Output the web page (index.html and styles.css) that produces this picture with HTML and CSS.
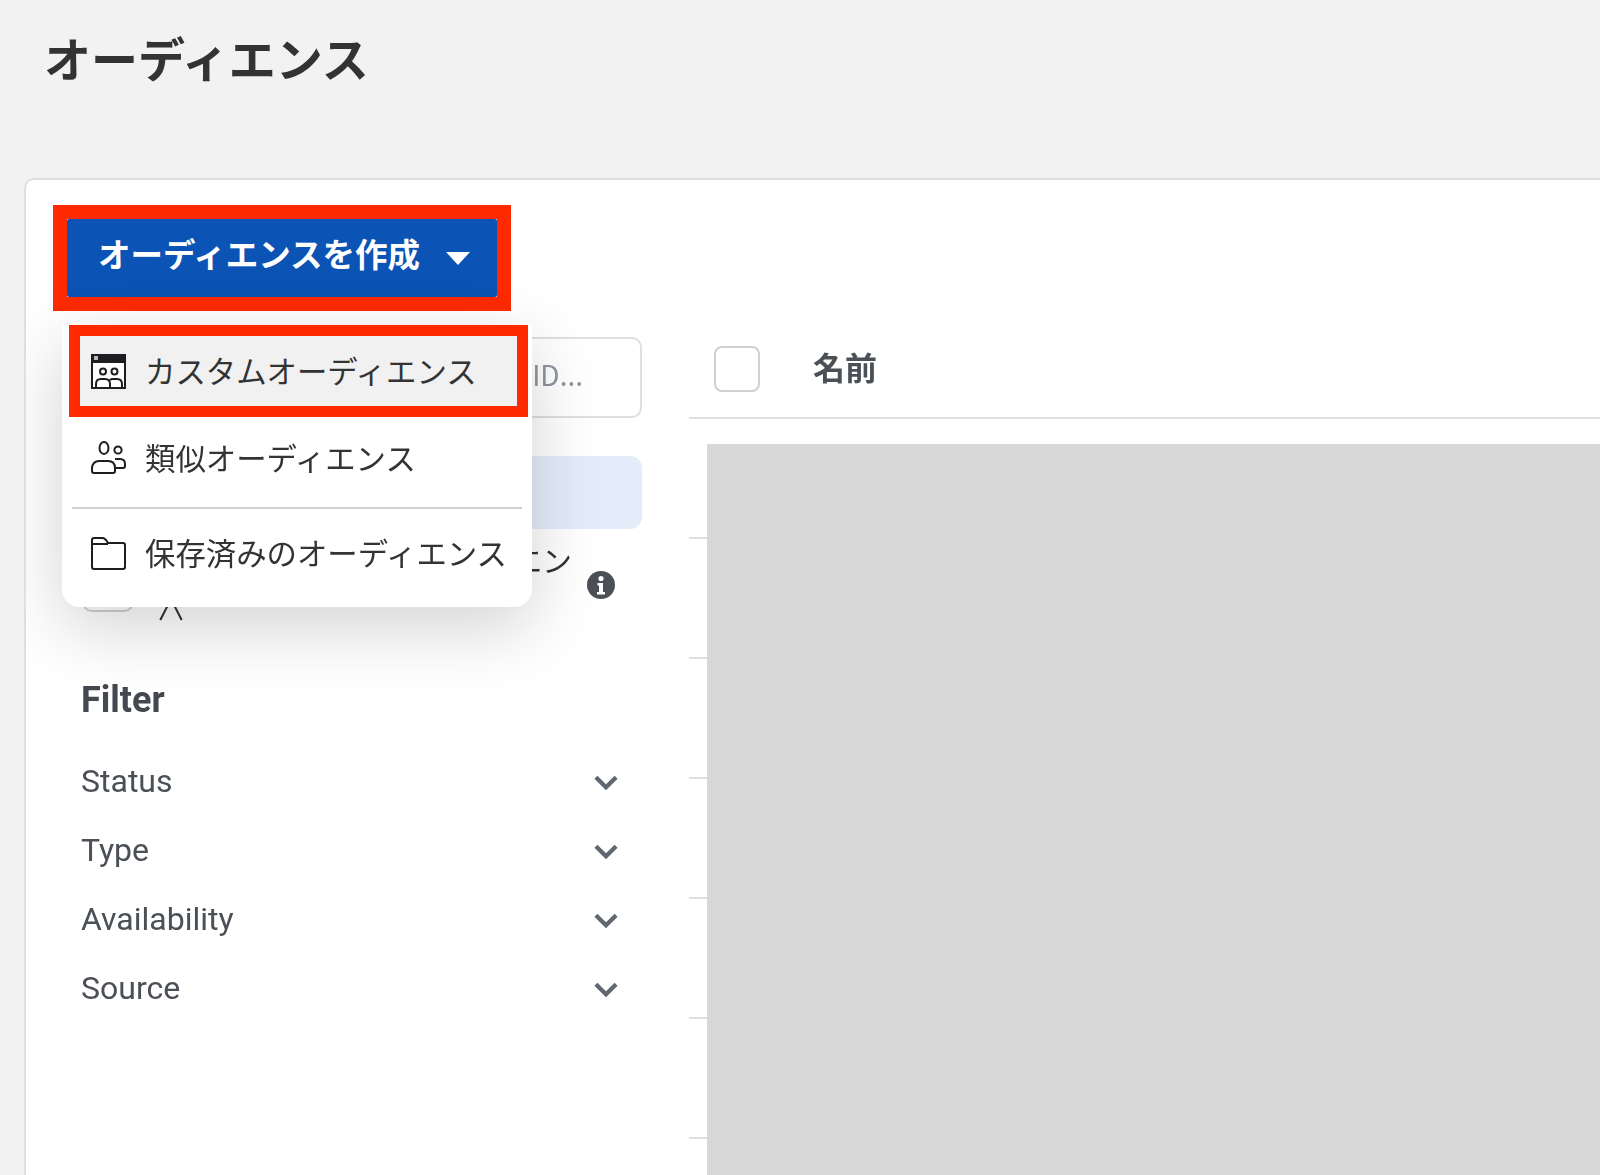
FILE: index.html
```html
<!DOCTYPE html>
<html lang="ja">
<head>
<meta charset="utf-8">
<title>オーディエンス</title>
<link rel="stylesheet" href="styles.css">
</head>
<body>
<div class="page">
  <h1 class="title">オーディエンス</h1>
  <main class="card">
    <div class="toolbar">
      <div class="create-outline">
        <button class="create-btn">オーディエンスを作成<span class="caret"></span></button>
      </div>
      <div class="menu">
        <div class="menu-item menu-item-active">
          <svg class="menu-icon" viewBox="0 0 37 37" fill="none" stroke="#1c1e21" stroke-width="2">
            <rect x="2" y="2" width="33" height="33" fill="#fff"/>
            <rect x="2" y="2" width="33" height="7" fill="#1c1e21"/>
            <rect x="4" y="3" width="4" height="4" fill="#bbb" stroke="none"/>
            <circle cx="13" cy="18.500" r="3"/><circle cx="24.500" cy="18.500" r="3"/>
            <path d="M6 34v-3c0-3 2-5 5-5h4c3 0 5 2 5 5v3M20 27c1-1 2-1 3-1h4c3 0 5 2 5 5v3"/>
          </svg>
          <span>カスタムオーディエンス</span>
        </div>
        <div class="menu-item menu-item-second">
          <svg class="menu-icon" viewBox="0 0 37 37" fill="none" stroke="#1c1e21" stroke-width="2">
            <ellipse cx="14" cy="9" rx="4.500" ry="6"/><circle cx="28" cy="11" r="3.600"/>
            <path d="M2 32v-3c0-4 3-7 7-7h9c5 0 7 3 7 7v3c0 1-1 2-2 2H4c-1 0-2-1-2-2zM25 20h5c3 0 5 2 5 5v2c0 1-1 2-2 2h-8"/>
          </svg>
          <span>類似オーディエンス</span>
        </div>
        <div class="menu-divider"></div>
        <div class="menu-item menu-item-last">
          <svg class="menu-icon" viewBox="0 0 37 37" fill="none" stroke="#1c1e21" stroke-width="2">
            <path d="M2 33V6c0-1 1-2 2-2h9c1 0 2 1 3 2l2 3h15c1 0 2 1 2 2v22c0 1-1 2-2 2H4c-1 0-2-1-2-2zM2 10h16"/>
          </svg>
          <span>保存済みのオーディエンス</span>
        </div>
      </div>
    </div>
    <div class="content">
      <aside class="sidebar">
        <div class="search">名前またはオーディエンスID...</div>
        <div class="selected-item"></div>
        <div class="toggle-row">
          <span class="toggle"></span>
          <span class="toggle-text">このアカウントのオーディエン<br><span class="toggle-tail">∧</span></span>
          <svg class="info" viewBox="0 0 28 28"><circle cx="14" cy="14" r="14" fill="#4b4f56"/><circle cx="14" cy="7.5" r="2.6" fill="#fff"/><path d="M10.5 12h5.5v9h2v2.5h-8V21h2v-6.500h-1.500z" fill="#fff"/></svg>
        </div>
        <h2 class="filter-title">Filter</h2>
        <ul class="filters">
          <li class="filter"><span>Status</span><svg class="chev" viewBox="0 0 24 16"><path d="M2.500 3l9.500 9.500L21.500 3" fill="none" stroke="#606770" stroke-width="4"/></svg></li>
          <li class="filter"><span>Type</span><svg class="chev" viewBox="0 0 24 16"><path d="M2.500 3l9.500 9.500L21.500 3" fill="none" stroke="#606770" stroke-width="4"/></svg></li>
          <li class="filter"><span>Availability</span><svg class="chev" viewBox="0 0 24 16"><path d="M2.500 3l9.500 9.500L21.500 3" fill="none" stroke="#606770" stroke-width="4"/></svg></li>
          <li class="filter"><span>Source</span><svg class="chev" viewBox="0 0 24 16"><path d="M2.500 3l9.500 9.500L21.500 3" fill="none" stroke="#606770" stroke-width="4"/></svg></li>
        </ul>
      </aside>
      <section class="table">
        <div class="table-head"><span class="checkbox"></span><span class="col-name">名前</span></div>
        <div class="row"></div><div class="row"></div><div class="row"></div>
        <div class="row"></div><div class="row"></div><div class="row"></div>
        <div class="redaction"></div>
      </section>
    </div>
  </main>
</div>
</body>
</html>
```
FILE: styles.css
```css
* { box-sizing: border-box; }
html, body { margin: 0; height: 100%; }
body {
  background: #f2f2f2;
  font-family: Roboto, "Noto Sans CJK JP", sans-serif;
  color: #1c1e21;
  overflow: hidden;
}
.page { display: flex; flex-direction: column; height: 1175px; padding-left: 24px; filter: blur(.5px); }
.title {
  margin: 0;
  height: 178px;
  padding: 25px 0 0 20px;
  font: 700 47px/64px "Noto Sans CJK JP", sans-serif;
  color: #333;
  letter-spacing: 0;
}
.card {
  flex: 1;
  min-height: 0;
  margin-right: -12px;
  background: #fff;
  border: 2px solid #dddfe2;
  border-bottom: 0;
  border-radius: 10px 0 0 0;
  padding: 25px 0 0 27px;
  overflow: hidden;
}
.toolbar { position: relative; }
.create-outline { width: 458px; height: 106px; border: 14px solid #ff2a00; }
.create-btn {
  width: 100%;
  height: 100%;
  border: 0;
  border-radius: 2px;
  background: #0b53b4;
  color: #fff;
  font: 700 32.5px/1 "Noto Sans CJK JP", sans-serif;
  display: flex;
  align-items: center;
  padding: 0 0 10px 31px;
  white-space: nowrap;
}
.caret {
  margin-left: 26px;
  border-left: 12px solid transparent;
  border-right: 12px solid transparent;
  border-top: 13px solid #fff;
  margin-top: 10px;
}
.menu {
  position: absolute;
  z-index: 2;
  left: 9px;
  top: 120px;
  width: 470px;
  padding: 0 4px 0 7px;
  background: #fff;
  border-radius: 0 0 18px 18px;
  box-shadow: 0 20px 70px rgba(0, 0, 0, .18);
  font: 400 30.4px/1.2 "Noto Sans CJK JP", sans-serif;
  color: #333;
}
.menu-item {
  display: flex;
  align-items: center;
  gap: 18px;
  height: 90px;
  padding: 0 0 0 21px;
  white-space: nowrap;
}
.menu-item-active {
  height: 92px;
  padding-left: 10px;
  border: 11px solid #ff2a00;
  background: #f1f1f1;
}
.menu-item-active span { margin-bottom: 2px; }
.menu-item-second { padding-bottom: 10px; }
.menu-item-last { height: 98px; padding-bottom: 12px; }
.menu-icon { width: 37px; height: 37px; flex: none; }
.menu-divider { height: 2px; margin: 0 6px 0 3px; background: #ced0d4; }
.content { display: flex; margin-top: 26px; }
.sidebar { width: 561px; flex: none; margin: 0 47px 0 28px; }
.search {
  height: 81px;
  border: 2px solid #dddfe2;
  border-radius: 10px;
  padding-right: 57px;
  padding-bottom: 8px;
  display: flex;
  justify-content: flex-end;
  align-items: center;
  font-size: 28px;
  color: #8d949e;
  font-family: "Noto Sans CJK JP", sans-serif;
  white-space: nowrap;
}
.selected-item { height: 73px; margin-top: 38px; background: #e3edfa; border-radius: 12px; }
.toggle-row { display: flex; align-items: flex-start; height: 151px; position: relative; }
.toggle {
  width: 52px;
  height: 40px;
  margin: 43px 0 0 1px;
  flex: none;
  border: 2px solid #ced0d4;
  border-radius: 10px;
}
.toggle-text {
  margin: 6px 0 0 20px;
  width: 424px;
  font: 400 30px/48px "Noto Sans CJK JP", sans-serif;
  color: #333;
  white-space: nowrap;
  text-align: left;
}
.toggle-tail { margin-left: 2px; }
.info { width: 28px; height: 28px; margin: 42px 0 0 9px; flex: none; }
.filter-title { margin: 0; font: 700 36px/40px Roboto, sans-serif; color: #444950; height: 66px; }
.filters { list-style: none; margin: 0; padding: 0; }
.filter {
  display: flex;
  justify-content: space-between;
  align-items: center;
  height: 69px;
  font: 400 32px/40px Roboto, sans-serif;
  color: #4b4f56;
  padding-right: 23px;
}
.chev { width: 26px; height: 17px; margin-top: 4px; }
.table { flex: 1; position: relative; min-width: 0; height: 900px; }
.table-head {
  display: flex;
  align-items: center;
  height: 82px;
  border-bottom: 2px solid #dddfe2;
  padding: 0 0 17px 25px;
}
.checkbox { width: 46px; height: 46px; border: 2px solid #ced0d4; border-radius: 8px; flex: none; }
.col-name {
  margin: 0 0 6px 53px;
  font: 700 32px/1 "Noto Sans CJK JP", sans-serif;
  color: #4b4f56;
}
.row { height: 120px; border-bottom: 2px solid #dddfe2; }
.redaction { position: absolute; left: 18px; right: 0; top: 107px; bottom: 0; background: #d8d8d8; }
```
